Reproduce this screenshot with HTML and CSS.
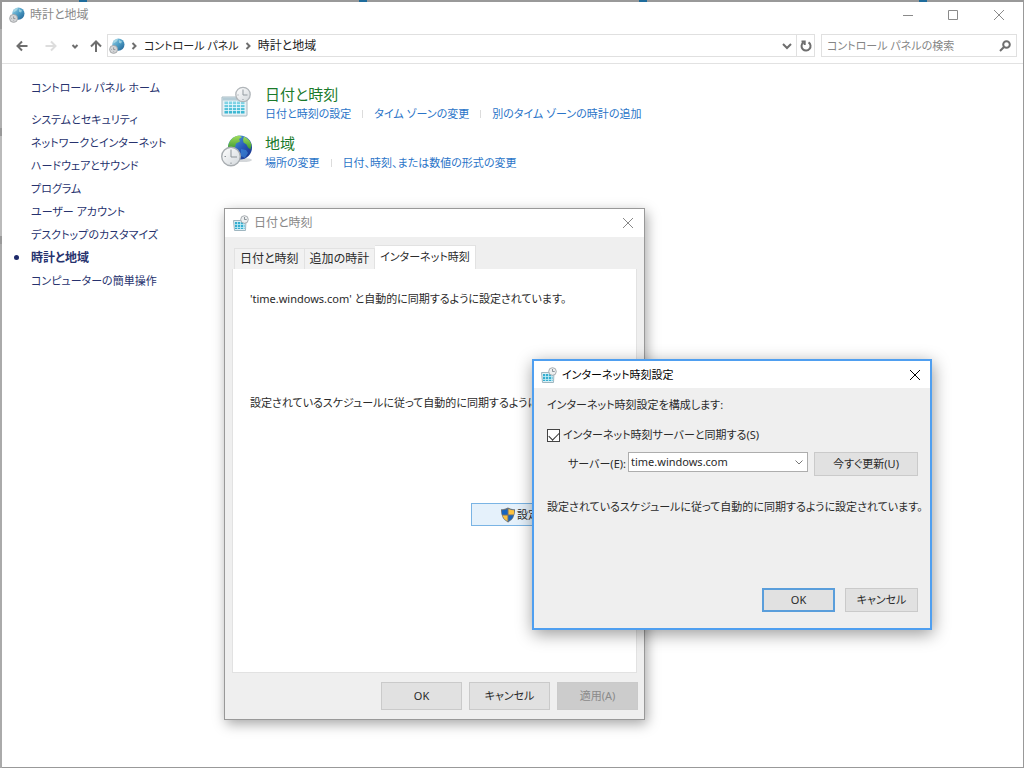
FILE: index.html
```html
<!doctype html>
<html lang="ja">
  <head>
    <meta charset="UTF-8" />
    <meta name="viewport" content="width=device-width, initial-scale=1.0" />
    <title>時計と地域</title>
    <link rel="stylesheet" href="styles.css">
  </head>
  <body>
    <!-- shared icons -->
    <svg class="icon-defs" aria-hidden="true">
      <defs>
        <linearGradient id="sea" x1="0" y1="0" x2="1" y2="1">
          <stop offset="0" stop-color="#58b7e0" />
          <stop offset="0.55" stop-color="#2858b8" />
          <stop offset="1" stop-color="#152b82" />
        </linearGradient>
        <linearGradient id="sea-pale" x1="0" y1="0" x2="1" y2="1">
          <stop offset="0" stop-color="#9ed4ea" />
          <stop offset="0.5" stop-color="#4b9cc4" />
          <stop offset="1" stop-color="#205d90" />
        </linearGradient>
        <linearGradient id="face" x1="0" y1="0" x2="1" y2="1">
          <stop offset="0" stop-color="#ffffff" />
          <stop offset="1" stop-color="#d3d8dc" />
        </linearGradient>
        <linearGradient id="cells" x1="0" y1="0" x2="0" y2="1">
          <stop offset="0" stop-color="#8bd8e8" />
          <stop offset="1" stop-color="#35b4d0" />
        </linearGradient>
        <linearGradient id="land" x1="0" y1="0" x2="0" y2="1">
          <stop offset="0" stop-color="#a2dc5c" />
          <stop offset="1" stop-color="#35962f" />
        </linearGradient>
        <symbol id="globe-small" viewBox="0 0 16 16">
          <circle cx="9.4" cy="6.6" r="6.1" fill="url(#sea-pale)" />
          <path d="M5 2.4q2-1.5 4-1.4l-1 2.2-2.2 1.6-1.7.6zM10 2l3 1.4-1 2-2-.6z" fill="#b6dfe8" opacity=".7" />
          <circle cx="4.6" cy="11.4" r="4" fill="#d4d6d8" stroke="#9a9da0" stroke-width=".8" />
          <path d="M4.600 9.400v2.200h1.800M2.300 11.500h.6M4.600 13.500v.6" fill="none" stroke="#7a7e82" stroke-width=".7" />
        </symbol>
        <symbol id="calendar-small" viewBox="0 0 16 16">
          <path d="M.5 5.500h12.500l-.5 10H1.500z" fill="#dceff5" stroke="#9fb6c0" />
          <path d="M2 7h9.500v7H2z" fill="#36aed0" />
          <path d="M4.500 7v7.500M7.500 7v7.500M10.500 7v7.500M2 9.500h10M2 12.500h10" stroke="#c4ecf6" stroke-width=".8" />
          <circle cx="11.500" cy="4.500" r="3.800" fill="#eceeef" stroke="#a0a6aa" stroke-width=".9" />
          <path d="M11.500 2v2.500h2.200" fill="none" stroke="#767e84" stroke-width=".8" />
        </symbol>
        <symbol id="calendar-clock" viewBox="0 0 32 32">
          <path d="M1 11h25v18q0 1-1 1H2q-1 0-1-1z" fill="#e6f0f4" stroke="#a9bac2" />
          <path d="M1.500 11.500h24v3h-24z" fill="#b5ccd6" />
          <path d="M3.500 15.500h20v12h-20z" fill="url(#cells)" />
          <path d="M7.500 15v13M11.500 15v13M15.500 15v13M19.500 15v13M3 18.500h21M3 21.500h21M3 24.500h21" stroke="#eefaff" stroke-width=".8" />
          <circle cx="22" cy="8.500" r="7.200" fill="url(#face)" stroke="#b0b5b9" stroke-width="1.300" />
          <path d="M22 3.500v5.500h4.500M16.500 9h1M22 13v1" fill="none" stroke="#939ba1" />
        </symbol>
        <symbol id="globe-clock" viewBox="0 0 32 32">
          <ellipse cx="22" cy="25" rx="9" ry="2" fill="#d4d7da" />
          <circle cx="19" cy="12.500" r="12" fill="url(#sea)" />
          <path d="M8 8Q11 1.500 18 .600l3 1.500-3 2 1 2.400-4 2-1 3.500-4 3-2.500-2q-.8-2.500.5-5z" fill="url(#land)" />
          <path d="M23 1.500q6 3 7.500 8l-1 5-2.500-2-1.500-3-3-2-.5-3z" fill="url(#land)" />
          <path d="M20 14l5 1 2 3-3 5-4-2z" fill="#3f8de0" opacity=".6" />
          <circle cx="10" cy="21.500" r="9.300" fill="url(#face)" stroke="#a8adb1" stroke-width="1.400" />
          <path d="M10 14.500v7.500h6M3.500 21.500H5M10 27.500V29" fill="none" stroke="#8d9499" />
        </symbol>
        <symbol id="close" viewBox="0 0 12 12">
          <path d="M1 1l10 10M11 1L1 11" fill="none" stroke="currentColor" />
        </symbol>
      </defs>
    </svg>

    <main class="window">
      <header class="titlebar">
        <svg class="icon"><use href="#globe-small" /></svg>
        <h1>時計と地域</h1>
        <div class="window-controls">
          <button aria-label="最小化"><svg viewBox="0 0 12 12"><path d="M1 6.500h10" /></svg></button>
          <button aria-label="最大化"><svg viewBox="0 0 12 12"><path d="M1.500 1.500h9v9h-9z" /></svg></button>
          <button aria-label="閉じる"><svg><use href="#close" /></svg></button>
        </div>
      </header>

      <div class="toolbar">
        <button class="nav-back" aria-label="戻る"><svg viewBox="0 0 12 12"><path d="M11.500 6H1.500M6 1.500L1.500 6 6 10.500" /></svg></button>
        <button class="nav-forward" aria-label="進む" disabled><svg viewBox="0 0 12 12"><path d="M.5 6h10M6 1.500L10.500 6 6 10.500" /></svg></button>
        <button class="nav-recent" aria-label="最近表示した場所"><svg viewBox="0 0 12 12"><path d="M3.500 5L6 7.500 8.500 5" /></svg></button>
        <button class="nav-up" aria-label="上へ"><svg viewBox="0 0 12 12"><path d="M6 12V1.500M1 6.500l5-5 5 5" /></svg></button>
        <nav class="address">
          <svg class="icon"><use href="#globe-small" /></svg>
          <svg class="crumb-arrow" viewBox="0 0 12 12"><path d="M4.500 3L7.500 6l-3 3" /></svg>
          <a href="#">コントロール パネル</a>
          <svg class="crumb-arrow" viewBox="0 0 12 12"><path d="M4.500 3L7.500 6l-3 3" /></svg>
          <a class="here" href="#">時計と地域</a>
          <button class="history" aria-label="以前の場所"><svg viewBox="0 0 12 12"><path d="M2 4l4 4 4-4" /></svg></button>
          <button class="refresh" aria-label="更新"><svg viewBox="0 0 12 12"><path d="M8.500 2.300a4.500 4.500 0 1 1-5.200.2M1.500 1.500h3.200v3.500" /></svg></button>
        </nav>
        <label class="search">
          <input type="search" placeholder="コントロール パネルの検索" aria-label="コントロール パネルの検索" />
          <svg viewBox="0 0 12 12"><circle cx="7.500" cy="4.500" r="3.300" /><path d="M5.200 6.800L1 11" /></svg>
        </label>
      </div>

      <div class="content">
        <nav class="sidebar">
          <a class="home" href="#">コントロール パネル ホーム</a>
          <a href="#">システムとセキュリティ</a>
          <a href="#">ネットワークとインターネット</a>
          <a href="#">ハードウェアとサウンド</a>
          <a href="#">プログラム</a>
          <a href="#">ユーザー アカウント</a>
          <a href="#">デスクトップのカスタマイズ</a>
          <a class="current" href="#" aria-current="page">時計と地域</a>
          <a href="#">コンピューターの簡単操作</a>
        </nav>
        <div class="categories">
          <section class="category">
            <svg class="icon-large"><use href="#calendar-clock" /></svg>
            <div>
              <h2><a href="#">日付と時刻</a></h2>
              <ul class="tasks">
                <li><a href="#">日付と時刻の設定</a></li>
                <li><a href="#">タイム ゾーンの変更</a></li>
                <li><a href="#">別のタイム ゾーンの時計の追加</a></li>
              </ul>
            </div>
          </section>
          <section class="category">
            <svg class="icon-large"><use href="#globe-clock" /></svg>
            <div>
              <h2><a href="#">地域</a></h2>
              <ul class="tasks">
                <li><a href="#">場所の変更</a></li>
                <li><a href="#">日付、時刻、または数値の形式の変更</a></li>
              </ul>
            </div>
          </section>
        </div>
      </div>
    </main>

    <section class="dialog date-time" role="dialog" aria-labelledby="date-time-title">
      <header class="dialog-title">
        <svg class="icon"><use href="#calendar-small" /></svg>
        <h2 id="date-time-title">日付と時刻</h2>
        <button class="close" aria-label="閉じる"><svg><use href="#close" /></svg></button>
      </header>
      <div class="tabs" role="tablist">
        <button role="tab">日付と時刻</button>
        <button role="tab">追加の時計</button>
        <button role="tab" aria-selected="true">インターネット時刻</button>
      </div>
      <div class="tab-panel" role="tabpanel">
        <p>'time.windows.com' と自動的に同期するように設定されています。</p>
        <p class="schedule">設定されているスケジュールに従って自動的に同期するように設定されています。</p>
        <button class="btn change">
          <svg viewBox="0 0 16 16">
            <path d="M8 .5q3 2 7 1.800.5 9-7 13.200Q.5 11.300 1 2.300 5 2.500 8 .5z" fill="#6c7379" />
            <path d="M7.500 2v5.500H2.200Q1.800 5.500 2 3.300 5 3.300 7.500 2zM8.500 8.500h5.100q-1.100 3.500-5.100 5.700z" fill="#1665c0" />
            <path d="M8.500 2q2.500 1.300 5.500 1.300.2 2.200-.2 4.200H8.500zM7.500 8.500v5.700q-4-2.200-5.100-5.700z" fill="#fdc23e" />
          </svg>
          設定の変更(C)...
        </button>
      </div>
      <footer class="dialog-actions">
        <button class="btn">OK</button>
        <button class="btn">キャンセル</button>
        <button class="btn" disabled>適用(A)</button>
      </footer>
    </section>

    <section class="dialog time-settings" role="dialog" aria-labelledby="settings-title">
      <header class="dialog-title">
        <svg class="icon"><use href="#calendar-small" /></svg>
        <h2 id="settings-title">インターネット時刻設定</h2>
        <button class="close" aria-label="閉じる"><svg><use href="#close" /></svg></button>
      </header>
      <form class="settings-form">
        <p>インターネット時刻設定を構成します:</p>
        <label class="sync"><input type="checkbox" checked />インターネット時刻サーバーと同期する(S)</label>
        <div class="server-row">
          <label for="server">サーバー(E):</label>
          <div class="combo">
            <select id="server"><option>time.windows.com</option></select>
            <svg viewBox="0 0 12 12"><path d="M2.500 4.500L6 8l3.500-3.500" /></svg>
          </div>
          <button class="btn" type="button">今すぐ更新(U)</button>
        </div>
        <p class="status">設定されているスケジュールに従って自動的に同期するように設定されています。</p>
        <div class="dialog-actions">
          <button class="btn default" type="button">OK</button>
          <button class="btn" type="button">キャンセル</button>
        </div>
      </form>
    </section>
  </body>
</html>
```
FILE: styles.css
```css
* {
  box-sizing: border-box;
}

body {
  margin: 0;
  padding: 2px 1px 1px 2px;
  min-height: 100vh;
  display: flex;
  position: relative;
  overflow: hidden;
  font-family: "Noto Sans", "Noto Sans CJK JP", sans-serif;
  font-size: 11px;
  font-feature-settings: "palt";
  line-height: 20px;
  color: #2a2a2a;
  background:
    repeating-linear-gradient(90deg, transparent 0 79px, #1f6c9c 79px 87px, transparent 87px 280px) top / 100% 2px no-repeat,
    linear-gradient(#999 0 29px, #b0b0b0 29px 128px, #999 128px 136px, #bbb 136px 236px, #999 236px 244px, #aaa 244px) left / 2px 100% no-repeat,
    #999;
}

h1,
h2,
p,
ul {
  margin: 0;
  padding: 0;
  font-size: inherit;
  font-weight: normal;
}

a {
  color: inherit;
  text-decoration: none;
}

a:hover {
  text-decoration: underline;
}

button,
input,
select {
  margin: 0;
  padding: 0;
  font: inherit;
  font-feature-settings: inherit;
  color: inherit;
  background: none;
  border: none;
}

svg {
  display: block;
  flex: none;
  width: 12px;
  height: 12px;
}

.icon-defs {
  position: absolute;
  width: 0;
  height: 0;
}

.icon {
  width: 16px;
  height: 16px;
}

.window {
  flex: 1;
  display: flex;
  flex-direction: column;
  background: #fff;
}

.titlebar {
  display: flex;
  align-items: center;
  gap: 5px;
  height: 26px;
  padding-left: 7px;
  font-size: 12px;
  color: #8a8a8a;
}

.window-controls {
  display: flex;
  margin-left: auto;
}

.window-controls button {
  display: grid;
  place-items: center;
  width: 45px;
  height: 26px;
}

.window-controls button:last-child {
  width: 48px;
}

.window-controls path {
  fill: none;
  stroke: currentColor;
}

/* navigation and address bar */
.toolbar {
  display: flex;
  align-items: center;
  height: 36px;
  padding: 0 6px 0 11px;
  border-bottom: 1px solid #e2e2e2;
  color: #6e6e6e;
}

.toolbar button {
  display: grid;
  place-items: center;
  height: 22px;
}

.toolbar path,
.toolbar circle {
  stroke: currentColor;
}

.toolbar .icon path,
.toolbar .icon circle {
  stroke: none;
}

.toolbar svg:not(.icon) {
  fill: none;
  stroke-width: 2;
}

.nav-back {
  width: 30px;
  padding-right: 12px;
}

.nav-forward {
  width: 22px;
  padding-right: 6px;
}

.toolbar .nav-forward {
  color: #ddd;
}

.nav-recent {
  width: 20px;
}

.nav-up {
  width: 22px;
}

.address {
  flex: 1;
  display: flex;
  align-items: center;
  height: 23px;
  margin-right: 6px;
  padding-left: 1px;
  border: 1px solid #e0e0e0;
  color: #222;
}

.address .crumb-arrow,
.address button {
  color: #6e6e6e;
}

.crumb-arrow {
  margin: 0 4px 0 3px;
}

.address .here {
  font-size: 12px;
}

.history {
  width: 18px;
  margin-left: auto;
}

.address .refresh {
  width: 18px;
  border-left: 1px solid #e0e0e0;
}

.search {
  display: flex;
  align-items: center;
  width: 196px;
  height: 23px;
  padding: 0 5px;
  border: 1px solid #e0e0e0;
}

.search input {
  flex: 1;
  min-width: 0;
  outline: none;
}

.search input::placeholder {
  color: #858585;
}

.content {
  display: flex;
}

.sidebar {
  display: flex;
  flex-direction: column;
  width: 219px;
  padding: 12px 0 0 29px;
  line-height: 23px;
  color: #27326e;
}

.sidebar .home {
  margin-bottom: 9px;
}

.sidebar .current {
  display: flex;
  align-items: center;
  gap: 12px;
  margin-left: -17px;
  font-size: 12px;
  font-weight: bold;
}

.sidebar .current::before {
  content: "";
  width: 5px;
  height: 5px;
  border-radius: 50%;
  background: #1e2a6a;
}

.categories {
  display: flex;
  flex-direction: column;
  gap: 9px;
  padding-top: 20px;
}

.category {
  display: flex;
  gap: 12px;
}

.icon-large {
  width: 32px;
  height: 32px;
  margin-top: 2px;
}

.category h2 {
  font-size: 15px;
  color: #1b7a2b;
}

.tasks {
  display: flex;
  list-style: none;
  color: #2a74c8;
}

.tasks li {
  display: flex;
  align-items: center;
}

.tasks li + li::before {
  content: "";
  width: 1px;
  height: 8px;
  margin: 0 11px;
  background: #dcdcdc;
}

/* dialogs */
.dialog {
  position: absolute;
  display: flex;
  flex-direction: column;
  background: #efefef;
}

.date-time {
  left: 224px;
  top: 208px;
  width: 421px;
  height: 512px;
  border: 1px solid #999;
  box-shadow: 2px 4px 12px rgba(0, 0, 0, 0.35);
}

.time-settings {
  left: 532px;
  top: 359px;
  width: 400px;
  height: 271px;
  border: 2px solid #4f9ff0;
  box-shadow: 1px 4px 16px rgba(0, 0, 0, 0.4);
}

.dialog-title {
  display: flex;
  align-items: center;
  gap: 5px;
  height: 28px;
  padding: 0 6px 0 8px;
  background: #fff;
}

.date-time .dialog-title {
  font-size: 12px;
  color: #888;
}

.time-settings .dialog-title {
  height: 27px;
  padding: 0 5px 0 7px;
  color: #000;
}

.close {
  display: grid;
  place-items: center;
  width: 20px;
  height: 20px;
  margin-left: auto;
}

.tabs {
  display: flex;
  align-items: flex-end;
  padding: 8px 9px 0;
}

.tabs button {
  height: 21px;
  padding: 0 5px;
  border: 1px solid #e2e2e2;
  border-bottom: none;
  background: #f2f2f2;
  font-size: 12px;
}

.tabs button + button {
  border-left: none;
}

.tabs button[aria-selected="true"] {
  height: 24px;
  padding-bottom: 2px;
  background: #fff;
  font-size: 11px;
}

.tab-panel {
  flex: 1;
  display: flex;
  flex-direction: column;
  margin: 0 7px;
  padding: 20px 13px 0 17px;
  border: 1px solid #e2e2e2;
  border-top: none;
  background: #fff;
  white-space: nowrap;
}

.schedule {
  margin-top: 84px;
}

.btn {
  display: flex;
  align-items: center;
  justify-content: center;
  background: #e1e1e1;
  border: 1px solid #cacaca;
}

.btn:disabled {
  color: #8a8a8a;
  background: #ccc;
}

.btn.default {
  border: 2px solid #5a9edb;
}

.btn.change {
  gap: 1px;
  width: 152px;
  height: 23px;
  align-self: flex-end;
  margin-top: 90px;
  background: #e5f1fb;
  border-color: #7ab4e4;
}

.btn.change svg {
  width: 16px;
  height: 16px;
}

.dialog-actions {
  display: flex;
  justify-content: flex-end;
}

.date-time .dialog-actions {
  gap: 7px;
  padding: 9px 6px;
}

.date-time .dialog-actions .btn {
  width: 81px;
  height: 28px;
}

.settings-form {
  flex: 1;
  display: flex;
  flex-direction: column;
  padding: 7px 12px 16px 13px;
  white-space: nowrap;
}

.sync {
  display: flex;
  align-items: center;
  gap: 3px;
  margin-top: 10px;
}

.sync input {
  appearance: none;
  width: 13px;
  height: 13px;
  border: 1px solid #444;
  background: #fff;
}

.sync input:checked::before {
  content: "";
  display: block;
  width: 9px;
  height: 5px;
  margin: 2px 1px;
  border: solid #333;
  border-width: 0 0 1px 1px;
  transform: rotate(-45deg);
}

.server-row {
  display: flex;
  justify-content: flex-end;
  margin-top: 7px;
}

.server-row label {
  margin: 2px 2px 0 0;
}

.server-row .btn {
  width: 104px;
  height: 24px;
  margin-left: 6px;
}

.combo {
  display: grid;
  align-items: center;
  width: 180px;
  height: 20px;
}

.combo select,
.combo svg {
  grid-area: 1 / 1;
}

.combo select {
  appearance: none;
  height: 20px;
  padding-left: 2px;
  border: 1px solid #adadad;
  background: #fff;
  line-height: 18px;
}

.combo svg {
  justify-self: end;
  margin-right: 3px;
  fill: none;
  stroke: #777;
  pointer-events: none;
}

.status {
  margin-top: 21px;
}

.time-settings .dialog-actions {
  gap: 10px;
  margin-top: auto;
}

.time-settings .dialog-actions .btn {
  width: 73px;
  height: 24px;
}
```
